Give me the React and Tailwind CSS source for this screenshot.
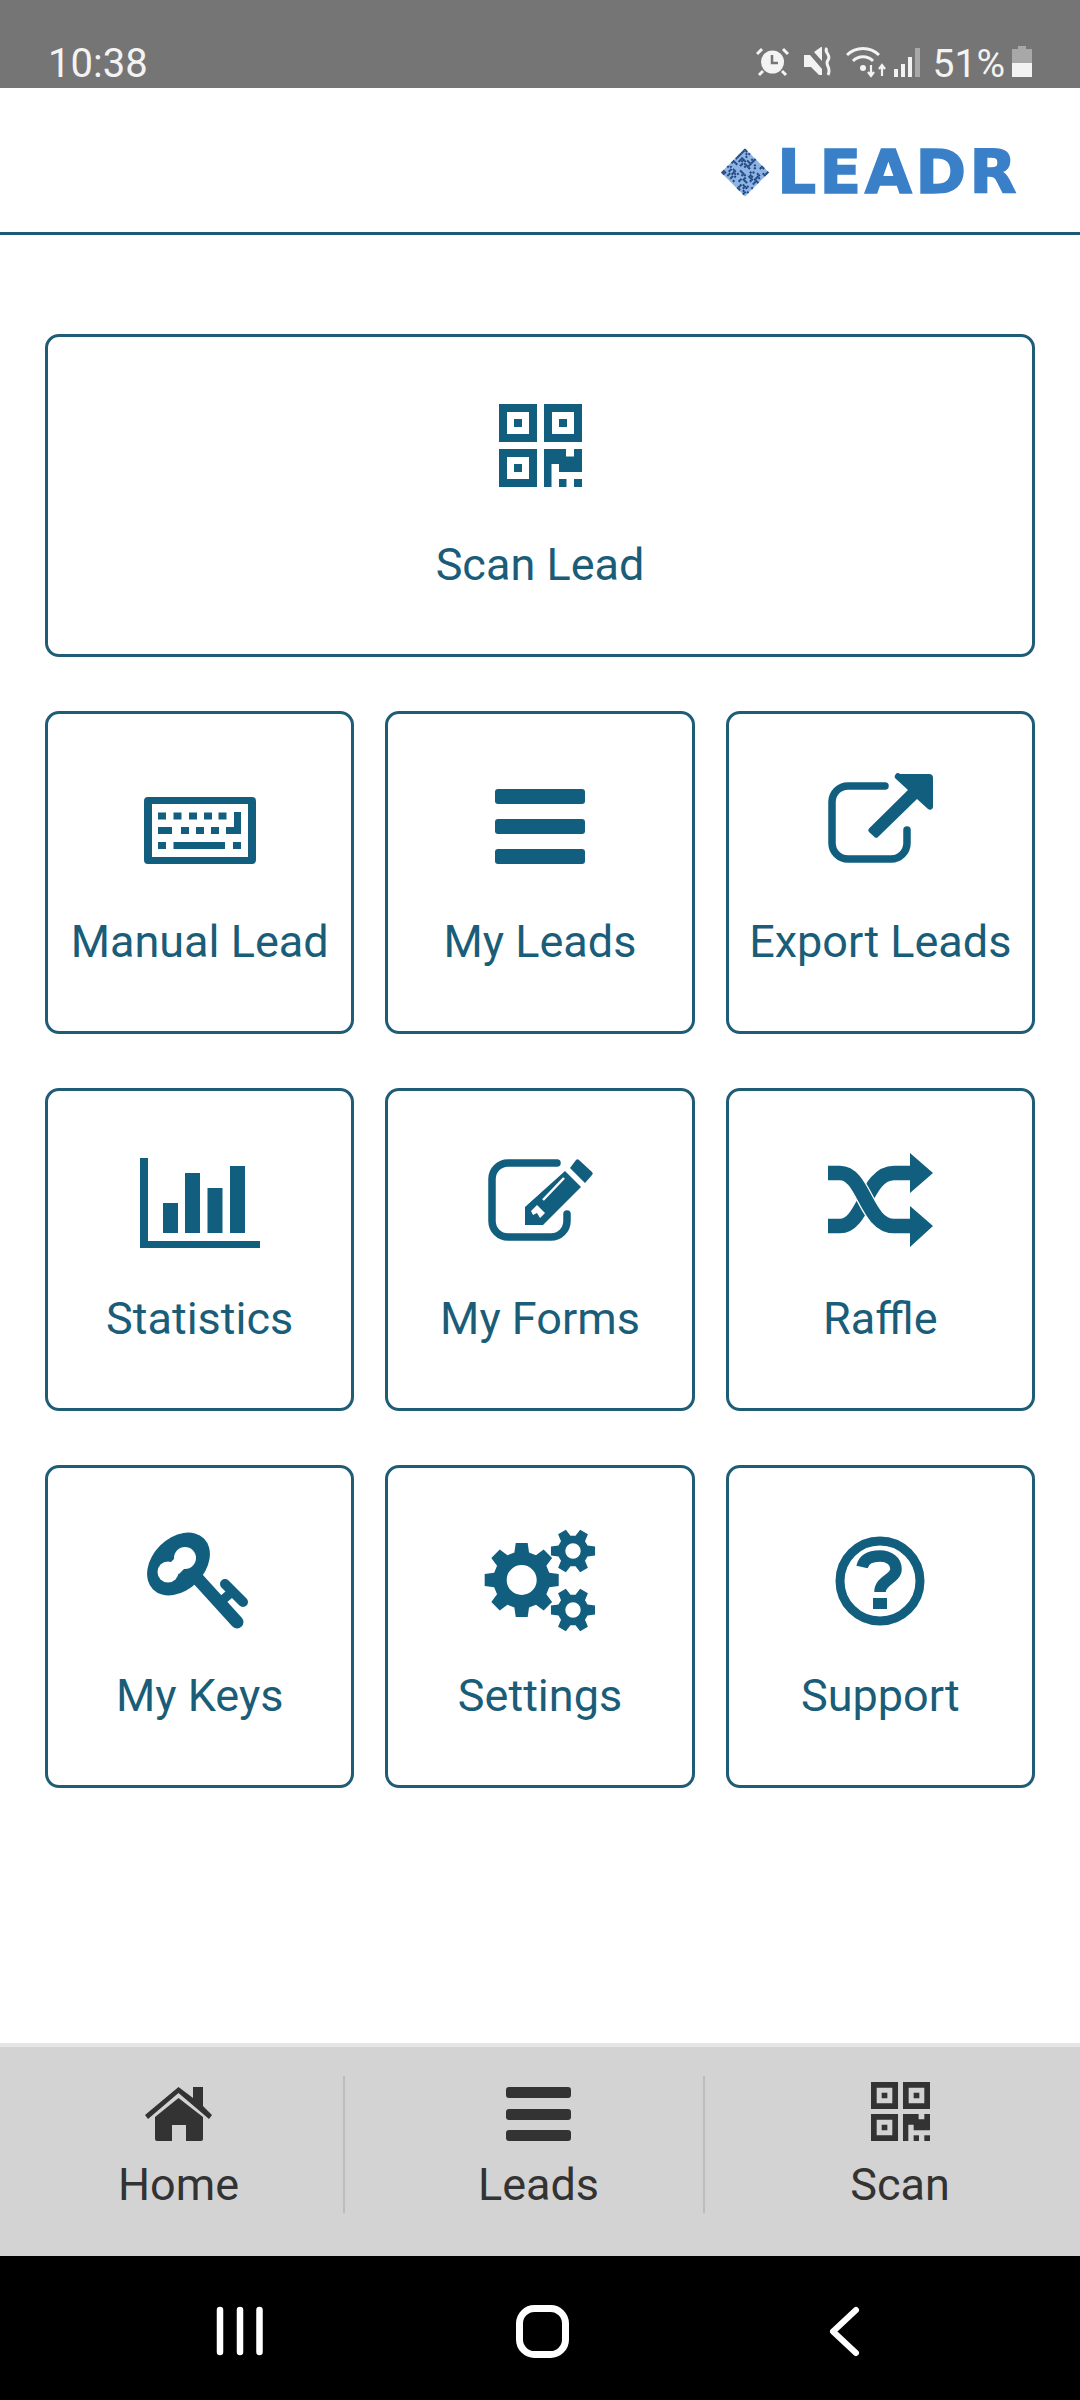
// Leadr home screen

function gearPath(cx, cy, n, R, r, w1, w2, hole) {
  let d = "";
  for (let i = 0; i < n; i++) {
    const a = (i * 2 * Math.PI) / n;
    const pts = [
      [r, a - w1],
      [R, a - w2],
      [R, a + w2],
      [r, a + w1],
    ];
    pts.forEach(([rad, t], j) => {
      const x = (cx + rad * Math.cos(t)).toFixed(2);
      const y = (cy + rad * Math.sin(t)).toFixed(2);
      d += (i === 0 && j === 0 ? "M" : "L") + x + " " + y;
    });
  }
  d += `Z M${cx - hole} ${cy}a${hole} ${hole} 0 1 0 ${hole * 2} 0a${hole} ${hole} 0 1 0 ${-hole * 2} 0Z`;
  return d;
}

function QrIcon({ className }) {
  const finder = "h38v38h-38Zm8 8v22h22v-22Zm7 7h8v8h-8Z";
  return (
    <svg viewBox="0 0 83 83" className={className} fill="currentColor" fillRule="evenodd">
      <path d={`M0 0${finder}`} />
      <path d={`M45 0${finder}`} />
      <path d={`M0 45${finder}`} />
      <path d="M45 45H67V52.5H75V45H83V68H60V60H52.5V83H45Z" />
      <rect x="60" y="75" width="7.5" height="8" />
      <rect x="75" y="75" width="8" height="8" />
    </svg>
  );
}

function BarsIcon({ className, h, gap }) {
  return (
    <div className={className}>
      <div className={`rounded-[3px] bg-current ${h}`} />
      <div className={`rounded-[3px] bg-current ${h} ${gap}`} />
      <div className={`rounded-[3px] bg-current ${h} ${gap}`} />
    </div>
  );
}

function KeyboardIcon({ className }) {
  const keys = [
    [14, 15.5, 8], [29.5, 15.5, 8], [45, 15.5, 8], [60, 15.5, 8], [74.5, 15.5, 8],
    [14, 30, 14], [37, 30, 8], [52, 30, 8], [67, 30, 8], [82, 30, 15],
    [14, 45, 8], [29.5, 45, 51.5], [89, 45, 8],
  ];
  return (
    <svg viewBox="0 0 112 67" className={className} fill="currentColor">
      <path fillRule="evenodd" d="M4 0H108a4 4 0 0 1 4 4V63a4 4 0 0 1-4 4H4a4 4 0 0 1-4-4V4a4 4 0 0 1 4-4ZM8 7V60H104V7Z" />
      {keys.map(([x, y, w], i) => (
        <rect key={i} x={x} y={y} width={w} height="7" />
      ))}
      <rect x="90" y="15" width="7" height="20" />
    </svg>
  );
}

function ExportIcon({ className }) {
  return (
    <svg viewBox="0 0 120 110" className={className}>
      <path d="M65 21H28A16 16 0 0 0 12 37V78A16 16 0 0 0 28 94H71A16 16 0 0 0 87 78V65" fill="none" stroke="currentColor" strokeWidth="7.5" strokeLinecap="round" />
      <path fill="currentColor" d="M80 9H109a4 4 0 0 1 4 4V42a3 3 0 0 1-5 2L97 34 58 72a2.500 2.500 0 0 1-3.500 0L49 67a2.500 2.500 0 0 1 0-3.500L88 25 76 14a3 3 0 0 1 4-5Z" />
    </svg>
  );
}

function ChartIcon({ className }) {
  return (
    <svg viewBox="0 0 120 90" className={className} fill="currentColor">
      <path d="M0 0H8V83H120V90H0Z" />
      <rect x="23" y="45" width="15" height="30" />
      <rect x="45" y="15" width="15" height="60" />
      <rect x="67.500" y="30" width="15" height="45" />
      <rect x="90" y="8" width="15" height="67" />
    </svg>
  );
}

function FormIcon({ className }) {
  return (
    <svg viewBox="0 0 120 100" className={className}>
      <path d="M77 18H28A16 16 0 0 0 12 34V76A16 16 0 0 0 28 92H71A16 16 0 0 0 87 76V69" fill="none" stroke="currentColor" strokeWidth="7.500" strokeLinecap="round" />
      <path fill="currentColor" d="M90 23L96 15a2 2 0 0 1 3 0L112 27a2 2 0 0 1 0 3L105 38ZM85 26L101 42 63 80H45V62Z" />
      <path d="M63 55L84 33" stroke="#fff" strokeWidth="2.500" />
      <path fill="#fff" d="M51 66L57 60 65 68 60 73 57 68 53 70Z" />
    </svg>
  );
}

function ShuffleIcon({ className }) {
  const crossA = "M12 20C36 20 38 73 66 73";
  return (
    <svg viewBox="0 0 105 94" className={className} fill="none">
      <path d="M0 73H12C36 73 38 20 66 20H85" stroke="currentColor" strokeWidth="14.500" />
      <path d={crossA} stroke="#fff" strokeWidth="17" />
      <path d="M0 20H12C36 20 38 73 66 73H85" stroke="currentColor" strokeWidth="14.500" />
      <path fill="currentColor" d="M82 0L105 20 82 40ZM82 53L105 73 82 94Z" />
    </svg>
  );
}

function KeyIcon({ className }) {
  return (
    <svg viewBox="0 0 120 120" className={className}>
      <path d="M57 53L97 97" stroke="currentColor" strokeWidth="13" strokeLinecap="round" />
      <path d="M85 59L103 77" stroke="currentColor" strokeWidth="10" strokeLinecap="round" />
      <path d="M78 79L93 66" stroke="currentColor" strokeWidth="9" />
      <ellipse cx="38.500" cy="39" rx="36" ry="26" transform="rotate(-45 38.500 39)" fill="currentColor" />
      <circle cx="28" cy="47" r="10.500" fill="#fff" />
      <circle cx="45" cy="33" r="11" fill="#fff" />
      <path d="M32 36L42 46" stroke="#fff" strokeWidth="9" />
    </svg>
  );
}

function GearsIcon({ className }) {
  return (
    <svg viewBox="0 0 130 120" className={className} fill="currentColor" fillRule="evenodd">
      <path d={gearPath(46.7, 60, 8, 37.5, 28.5, 0.26, 0.16, 15)} />
      <path d={gearPath(98, 31, 6, 22.5, 15.5, 0.36, 0.2, 7.7)} />
      <path d={gearPath(98, 90, 6, 22.5, 15.5, 0.36, 0.2, 7.7)} />
    </svg>
  );
}

function QuestionIcon({ className }) {
  return (
    <svg viewBox="0 0 90 90" className={className} fill="none">
      <circle cx="45" cy="45" r="40" stroke="currentColor" strokeWidth="9" />
      <path d="M27 31C29 22 37 20 45 20C54 20 61 25 61 33C61 43 45 44 45 56" stroke="currentColor" strokeWidth="11.500" />
      <rect x="38" y="62" width="14" height="11" fill="currentColor" />
    </svg>
  );
}

function HomeIcon({ className }) {
  return (
    <svg viewBox="0 0 67 54" className={className} fill="currentColor">
      <path d="M33.500 11L58 30V52a2 2 0 0 1-2 2H41V38H27V54H12a2 2 0 0 1-2-2V30Z" />
      <path d="M0 28L33.500 0 48 11V0H58V19L67 28 64 32 33.500 6 3 32Z" />
    </svg>
  );
}

// speckled QR in the logo, fixed seed so it stays the same between renders
function LogoMark({ className }) {
  const cells = [];
  let seed = 7;
  for (let y = 0; y < 17; y++) {
    for (let x = 0; x < 17; x++) {
      seed = (seed * 1103 + 12345) % 65536;
      if (seed % 5 < 2) cells.push([x, y]);
    }
  }
  return (
    <svg viewBox="0 0 48 49" className={className}>
      <g transform="translate(24 24.500) rotate(45) translate(-17 -17)">
        <rect width="34" height="34" fill="#8db4e4" />
        {cells.map(([x, y]) => (
          <rect key={`${x}-${y}`} x={x * 2} y={y * 2} width="2" height="2" fill="#21477f" />
        ))}
      </g>
    </svg>
  );
}

function StatusIcons() {
  return (
    <div className="flex items-start pt-[45px] text-[#f3f3f3]">
      <svg viewBox="0 -2 33 33" className="h-[33px] w-[33px]" fill="none" stroke="currentColor">
        <circle cx="16.500" cy="15" r="11.500" fill="currentColor" stroke="none" />
        <path d="M16 8V16H22" stroke="#757575" strokeWidth="2.500" />
        <path d="M1 7L6 2M32 7L27 2M7 24L3 28M26 24L30 28" strokeWidth="3" />
      </svg>
      <svg viewBox="0 -2 30 33" className="ml-[14px] h-[33px] w-[30px]" fill="currentColor">
        <path d="M1 8H7L19 22V28H16L8 20H1ZM11 5L18 0H19V14Z" />
        <path d="M24 1C20 5 29 8 25 13C21 18 29 20 25 28" fill="none" stroke="currentColor" strokeWidth="3" />
      </svg>
      <svg viewBox="0 0 40 33" className="ml-[13px] h-[33px] w-[40px]" fill="none" stroke="currentColor" strokeWidth="3">
        <path d="M1 10A23 23 0 0 1 33 10M7 16A14 14 0 0 1 27 16" />
        <circle cx="17" cy="23" r="3" fill="currentColor" stroke="none" />
        <path d="M25 20V30M22 27L25 31 28 27M36 31V21M33 24L36 20 39 24" strokeWidth="2.200" />
      </svg>
      <svg viewBox="0 -3 26 33" className="ml-[8px] h-[33px] w-[26px]" fill="currentColor">
        <rect x="0" y="21" width="4" height="8" />
        <rect x="7" y="16" width="4" height="13" />
        <rect x="14" y="9" width="4" height="20" />
        <rect x="21" y="0" width="5" height="29" fill="#a8a8a8" />
      </svg>
      <span className="ml-[13px] -mt-[5px] text-[39px] leading-[48px]">51%</span>
      <svg viewBox="0 -1 20 33" className="ml-[7px] h-[33px] w-[20px]">
        <rect x="6" y="0" width="8" height="3" fill="#a8a8a8" />
        <rect x="0" y="3" width="20" height="14" fill="#a8a8a8" />
        <rect x="0" y="17" width="20" height="14" fill="#f3f3f3" />
      </svg>
    </div>
  );
}

function Tile({ label, children }) {
  return (
    <button className="flex h-[323px] flex-col items-center rounded-[14px] border-[3px] border-[#1f5c76] bg-white">
      <div className="flex h-[202px] justify-center">{children}</div>
      <span className="whitespace-nowrap text-[45px] leading-[52px] text-[#1a5d78]">{label}</span>
    </button>
  );
}

function NavItem({ label, children, divider }) {
  return (
    <div className={`relative flex flex-col items-center ${divider ? "pr-[3px]" : ""}`}>
      <div className="flex h-[112px] justify-center">{children}</div>
      <span className="text-[45px] leading-[52px] text-[#333333]">{label}</span>
      {divider && <div className="absolute right-[15px] top-[29px] h-[137px] w-[2px] bg-[#bdbdbd]" />}
    </div>
  );
}

export default function App() {
  return (
    <div className="flex h-[2400px] w-[1080px] flex-col bg-white font-[family-name:Roboto,sans-serif]">
      {/* status bar */}
      <div className="flex h-[88px] justify-between bg-[#757575] pl-[48px] pr-[48px]">
        <span className="pt-[40px] text-[40px] leading-[48px] text-[#f3f3f3]">10:38</span>
        <StatusIcons />
      </div>

      {/* header */}
      <div className="flex h-[147px] items-center justify-end border-b-[3px] border-[#1b5a76] pr-[60px] pt-[24px]">
        <LogoMark className="h-[49px] w-[48px]" />
        <span className="ml-[8px] font-[family-name:'DejaVu_Sans',sans-serif] text-[61px] font-bold leading-[60px] tracking-[3.5px] text-[#3a80c9] [-webkit-text-stroke:1.5px_#3a80c9]">
          LEADR
        </span>
      </div>

      {/* menu */}
      <div className="flex flex-1 flex-col gap-[54px] px-[45px] pt-[99px]">
        <Tile label="Scan Lead">
          <QrIcon className="mt-[67px] h-[83px] w-[83px] text-[#125e7f]" />
        </Tile>
        <div className="grid grid-cols-3 gap-x-[31px] gap-y-[54px]">
          <Tile label="Manual Lead">
            <KeyboardIcon className="mt-[83px] h-[67px] w-[112px] text-[#125e7f]" />
          </Tile>
          <Tile label="My Leads">
            <BarsIcon className="mt-[75px] w-[90px] text-[#125e7f]" h="h-[15px]" gap="mt-[15px]" />
          </Tile>
          <Tile label="Export Leads">
            <ExportIcon className="mt-[51px] h-[110px] w-[120px] text-[#125e7f]" />
          </Tile>
          <Tile label="Statistics">
            <ChartIcon className="mt-[67px] h-[90px] w-[120px] text-[#125e7f]" />
          </Tile>
          <Tile label="My Forms">
            <FormIcon className="mt-[54px] h-[100px] w-[120px] text-[#125e7f]" />
          </Tile>
          <Tile label="Raffle">
            <ShuffleIcon className="mt-[62px] h-[94px] w-[105px] text-[#125e7f]" />
          </Tile>
          <Tile label="My Keys">
            <KeyIcon className="mt-[57px] h-[120px] w-[120px] text-[#125e7f]" />
          </Tile>
          <Tile label="Settings">
            <GearsIcon className="mt-[52px] h-[120px] w-[130px] text-[#125e7f]" />
          </Tile>
          <Tile label="Support">
            <QuestionIcon className="mt-[68px] h-[90px] w-[90px] text-[#125e7f]" />
          </Tile>
        </div>
      </div>

      {/* tab bar */}
      <div className="grid h-[213px] grid-cols-3 border-t-4 border-[#e6e6e6] bg-[#d3d3d3]">
        <NavItem label="Home" divider>
          <HomeIcon className="mt-[40px] h-[54px] w-[67px] text-[#333333]" />
        </NavItem>
        <NavItem label="Leads" divider>
          <BarsIcon className="mt-[40px] w-[65px] text-[#333333]" h="h-[11px]" gap="mt-[10.500px]" />
        </NavItem>
        <NavItem label="Scan">
          <QrIcon className="mt-[35px] h-[59px] w-[59px] text-[#333333]" />
        </NavItem>
      </div>

      {/* android nav */}
      <div className="flex h-[144px] items-center justify-center bg-black">
        <svg viewBox="0 0 1080 144" className="h-[144px] w-[1080px]" fill="none" stroke="#fff">
          <path d="M220 54V96M240 54V96M259.500 54V96" strokeWidth="6.500" strokeLinecap="round" />
          <rect x="519.500" y="52.500" width="46" height="46" rx="15" strokeWidth="7" />
          <path d="M856 54L833 75.500 856 97" strokeWidth="6" strokeLinecap="round" strokeLinejoin="round" />
        </svg>
      </div>
    </div>
  );
}
